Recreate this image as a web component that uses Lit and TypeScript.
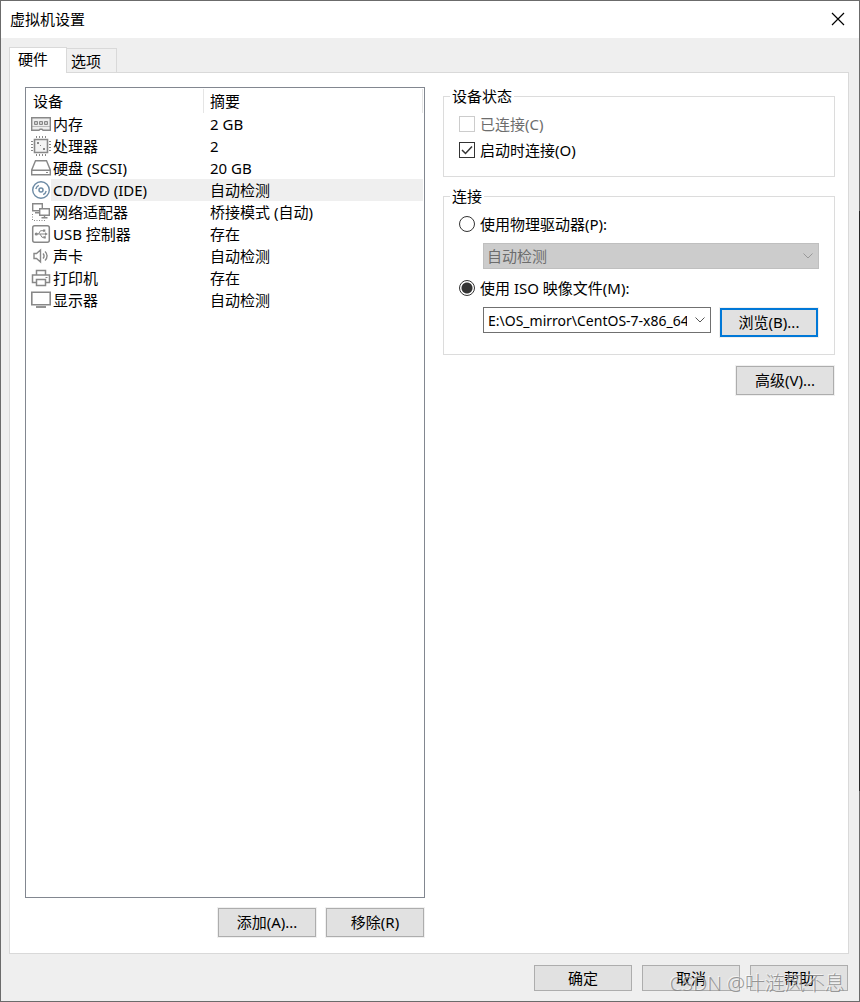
import { LitElement, html, svg, css } from "lit";
import { customElement, state } from "lit/decorators.js";

interface Device {
  icon: string;
  name: string;
  summary: string;
}

const DEVICES: Device[] = [
  { icon: "memory", name: "内存", summary: "2 GB" },
  { icon: "cpu", name: "处理器", summary: "2" },
  { icon: "disk", name: "硬盘 (SCSI)", summary: "20 GB" },
  { icon: "cd", name: "CD/DVD (IDE)", summary: "自动检测" },
  { icon: "network", name: "网络适配器", summary: "桥接模式 (自动)" },
  { icon: "usb", name: "USB 控制器", summary: "存在" },
  { icon: "sound", name: "声卡", summary: "自动检测" },
  { icon: "printer", name: "打印机", summary: "存在" },
  { icon: "display", name: "显示器", summary: "自动检测" },
];

const ICONS: Record<string, unknown> = {
  memory: svg`
    <path d="M.7 3.700h18.600v9.600H.7z" fill="#eee" stroke-width="1.400" />
    <path d="M.7 13v3.300h7.300l1-1h2l1 1h7.300V13" fill="#eee" stroke-width="1.400" />
    <path d="M3.500 7.500h3v3h-3zM8.500 7.500h3v3h-3zM13.500 7.500h3v3h-3z" fill="#ccc" />`,
  cpu: svg`
    <path d="M3.500 3.500h13v13h-13z" fill="#f4f4f4" stroke-width="1.600" />
    <path d="M5.500 0v2M8.500 0v2M11.500 0v2M14.500 0v2M5.500 18v2M8.500 18v2M11.500 18v2M14.500 18v2M0 5.500h2M0 8.500h2M0 11.500h2M0 14.500h2M18 5.500h2M18 8.500h2M18 11.500h2M18 14.500h2" />
    <path d="M6 6h2v2h-2zM12 12h2v2h-2zM9 9h1v1h-1z" fill="#888" stroke="none" />`,
  disk: svg`
    <path d="M4.500 2.700h11l3.800 9.300v4.800H.7V12zM.7 12.300h18.600" stroke-width="1.400" />
    <path d="M15 14.500h2" />`,
  cd: svg`
    <g stroke="#6d8ba5">
      <circle cx="10" cy="10" r="8.300" fill="#fff" stroke-width="1.400" />
      <circle cx="10" cy="10" r="2" stroke-width="1.500" />
      <path d="M4.800 9a5.500 5.500 0 0 1 3-3.700M15.200 11a5.500 5.500 0 0 1-3 3.700" stroke-width="1.300" />
    </g>`,
  network: svg`
    <path d="M1.700 1.700h9.600v7.100H1.700zM4 10.800h4" stroke-width="1.400" />
    <path d="M8.700 6.700h9.600v6.600H8.700z" fill="#fff" stroke-width="1.400" />
    <path d="M13.500 13.500v2M10.500 15.700h6" stroke-width="1.400" />
    <path d="M1.500 12v7M3 18.500h11" stroke-dasharray="1 1.500" />`,
  usb: svg`
    <rect x="1.700" y="1.700" width="16.600" height="16.600" rx="2" stroke-width="1.500" />
    <path d="M5 10h10M7.500 10l2-3.300h3M9 10l2 3.300h2.500" />
    <path d="M12 5.500h2.300v2.300H12zM12.500 12.200h2.300v2.300h-2.300zM14 8.300l2.800 1.700-2.800 1.700z" fill="#888" stroke="none" />
    <circle cx="5.300" cy="10" r="1.600" fill="#888" stroke="none" />`,
  sound: svg`
    <path d="M3 7.500h2.500l4-3.500v12l-4-3.500H3z" stroke-width="1.400" />
    <path d="M12 7.500a3.500 3.500 0 0 1 0 5M14 5.500a6 6 0 0 1 0 9" stroke-width="1.400" />`,
  printer: svg`
    <path d="M5.500 7V2.500h9V7M5.500 14.500h-4V7h17v7.500h-4M5.500 11.500h9v6h-9z" stroke-width="1.500" />
    <path d="M14.500 9.500h2" />`,
  display: svg`
    <path d="M.8 2.300h18.400v12.400H.8z" stroke-width="1.600" />
    <path d="M5 17h10" stroke-width="1.800" />`,
};

@customElement("app-root")
export class AppRoot extends LitElement {
  @state() private selected = 3;

  static styles = css`
    :host {
      display: block;
      font: 15px/20px "Noto Sans", "Noto Sans CJK SC", sans-serif;
      color: #000;
    }
    * { box-sizing: border-box; }
    button, input, select { font: inherit; color: inherit; margin: 0; }
    .dialog {
      display: flex;
      flex-direction: column;
      min-height: 100vh;
      position: relative;
      background: #efefef;
      border: 1px solid #6b6b6b;
    }
    .dialog::after {
      content: "";
      position: absolute;
      top: 21%;
      right: -1px;
      bottom: 21%;
      width: 1px;
      background: #262626;
    }
    .titlebar {
      display: flex;
      align-items: center;
      justify-content: space-between;
      height: 37px;
      padding: 0 9px 2px;
      background: #fff;
    }
    .title { font-size: 15px; font-weight: 400; margin: 0; }
    .close {
      display: flex;
      padding: 5px;
      border: 0;
      background: none;
    }
    .tabs {
      display: flex;
      align-items: flex-end;
      margin: 9px 10px 0 8px;
    }
    .tab {
      height: 24px;
      padding: 0 15px 0 4px;
      border: 1px solid #d9d9d9;
      border-bottom: 0;
      border-left: 0;
      background: #f0f0f0;
    }
    .tab.active {
      height: 26px;
      margin-bottom: -1px;
      padding: 0 18px 4px 8px;
      border-left: 1px solid #d9d9d9;
      background: #fff;
      z-index: 1;
    }
    .panel {
      flex: 1;
      display: grid;
      grid-template-columns: minmax(0, 400fr) minmax(0, 392fr);
      gap: 18px;
      margin: 0 10px 0 8px;
      padding: 14px 13px 16px 15px;
      border: 1px solid #d9d9d9;
      background: #fff;
    }
    .hardware { display: flex; flex-direction: column; gap: 10px; }
    .list {
      flex: 1;
      border: 1px solid #828790;
      padding-right: 1px;
    }
    .devices {
      width: 100%;
      table-layout: fixed;
      border-collapse: collapse;
    }
    .devices th {
      height: 25px;
      padding: 0 7px;
      font-weight: 400;
      text-align: left;
      background: linear-gradient(#e5e5e5, #e5e5e5) right 1px / 1px 24px no-repeat;
    }
    .devices th + th { padding-left: 6px; }
    .col-name { width: 178px; }
    .devices td { height: 22px; padding: 0 6px; white-space: nowrap; }
    .devices .device { display: flex; align-items: center; padding: 0 0 0 5px; }
    .label { flex: 1; padding-left: 2px; line-height: 22px; }
    .selected .label, .selected .summary { background: #efefef; }
    .icon { width: 20px; height: 20px; fill: none; stroke: #888; flex: none; }
    .actions { display: flex; justify-content: flex-end; gap: 10px; padding-right: 1px; }
    .btn {
      width: 98px;
      height: 29px;
      padding: 0 0 2px;
      border: 1px solid #adadad;
      background: #e1e1e1;
      box-shadow: 0 0 0 1px #f0f0f0;
    }
    .btn.focus { border: 2px solid #0078d7; }
    .settings { display: flex; flex-direction: column; }
    .group {
      min-width: 0;
      margin: -1px 0 11px;
      border: 1px solid #dcdcdc;
      padding: 5px 15px 17px;
    }
    .group.status { padding-bottom: 13px; margin-bottom: 10px; }
    .legend { padding: 0 2px; margin-left: -9px; }
    .choice { display: flex; align-items: center; gap: 5px; height: 26px; }
    .choice.disabled { color: #6d6d6d; }
    .box {
      appearance: none;
      flex: none;
      width: 16px;
      height: 16px;
      border: 1px solid #333;
      background: #fff;
    }
    .box:disabled { border-color: #ccc; }
    .box:checked {
      background: url("data:image/svg+xml,%3Csvg xmlns='http://www.w3.org/2000/svg' viewBox='0 0 14 14'%3E%3Cpath d='M2 7l3.500 3.500L12 3.500' fill='none' stroke='%23333' stroke-width='1.500'/%3E%3C/svg%3E");
    }
    .box.round { border-radius: 50%; }
    .box.round:checked { background: radial-gradient(circle, #333 5px, #fff 6px); }
    .combo {
      display: flex;
      align-items: center;
      height: 26px;
      margin-left: 24px;
      border: 1px solid #707070;
      background: #fff;
    }
    .physical {
      appearance: none;
      display: block;
      width: calc(100% - 24px);
      margin: 6px 0 6px 24px;
      padding: 0 3px;
      border-color: #bfbfbf;
      color: #6d6d6d;
      opacity: 1;
      background: #ccc url("data:image/svg+xml,%3Csvg xmlns='http://www.w3.org/2000/svg' width='10' height='6'%3E%3Cpath d='M.5.5L5 5 9.500.5' fill='none' stroke='%23999'/%3E%3C/svg%3E") right 5px center no-repeat;
    }
    .image-row {
      display: flex;
      align-items: flex-start;
      gap: 9px;
      margin-top: 6px;
      padding-right: 1px;
    }
    .image-row .combo { flex: 1; min-width: 0; }
    .path {
      flex: 1;
      min-width: 0;
      height: 24px;
      padding: 0;
      margin-left: 4px;
      border: 0;
      outline: 0;
      font-size: 14px;
      background: none;
    }
    .drop { display: flex; border: 0; padding: 0 5px; margin-left: 3px; background: none; }
    .image-row .btn { margin-top: 1px; flex: none; }
    .glyph { fill: none; stroke: #555; }
    .close .glyph { stroke: #000; stroke-width: 1.200; }
    .footer { display: flex; justify-content: flex-end; gap: 10px; padding: 11px 11px 10px; }
    .footer .btn { height: 26px; padding: 0; box-shadow: none; }
    .watermark {
      position: absolute;
      right: 14px;
      bottom: 3px;
      font-size: 20px;
      font-weight: 300;
      line-height: 28px;
      color: rgba(135, 135, 135, 0.85);
      text-shadow: -1px -1px 0 rgba(255, 255, 255, 0.6);
      pointer-events: none;
    }
  `;

  render() {
    return html`
      <div class="dialog">
        <header class="titlebar">
          <h1 class="title">虚拟机设置</h1>
          <button class="close" aria-label="关闭">
            <svg class="glyph" width="14" height="14"><path d="M1 1l12 12M13 1L1 13" /></svg>
          </button>
        </header>
        <nav class="tabs" role="tablist">
          <button class="tab active" role="tab" aria-selected="true">硬件</button>
          <button class="tab" role="tab" aria-selected="false">选项</button>
        </nav>
        <main class="panel">
          <section class="hardware">
            <div class="list">
              <table class="devices">
                <thead>
                  <tr><th class="col-name">设备</th><th>摘要</th></tr>
                </thead>
                <tbody>
                  ${DEVICES.map(
                    (d, i) => html`
                      <tr class=${i === this.selected ? "selected" : ""} @click=${() => (this.selected = i)}>
                        <td class="device">
                          <svg class="icon" viewBox="0 0 20 20">${ICONS[d.icon]}</svg>
                          <span class="label">${d.name}</span>
                        </td>
                        <td class="summary">${d.summary}</td>
                      </tr>
                    `
                  )}
                </tbody>
              </table>
            </div>
            <div class="actions">
              <button class="btn">添加(A)...</button>
              <button class="btn">移除(R)</button>
            </div>
          </section>
          <section class="settings">
            <fieldset class="group status">
              <legend class="legend">设备状态</legend>
              <label class="choice disabled"><input class="box" type="checkbox" disabled />已连接(C)</label>
              <label class="choice"><input class="box" type="checkbox" checked />启动时连接(O)</label>
            </fieldset>
            <fieldset class="group">
              <legend class="legend">连接</legend>
              <label class="choice"><input class="box round" type="radio" name="source" />使用物理驱动器(P):</label>
              <select class="combo physical" aria-label="物理驱动器" disabled>
                <option>自动检测</option>
              </select>
              <label class="choice"><input class="box round" type="radio" name="source" checked />使用 ISO 映像文件(M):</label>
              <div class="image-row">
                <div class="combo">
                  <input class="path" type="text" aria-label="ISO 映像文件" value="E:\\OS_mirror\\CentOS-7-x86_64" />
                  <button class="drop" aria-label="展开">
                    <svg class="glyph" width="10" height="6"><path d="M.5.5L5 5L9.500.5" /></svg>
                  </button>
                </div>
                <button class="btn focus">浏览(B)...</button>
              </div>
            </fieldset>
            <div class="actions">
              <button class="btn">高级(V)...</button>
            </div>
          </section>
        </main>
        <footer class="footer">
          <button class="btn">确定</button>
          <button class="btn">取消</button>
          <button class="btn">帮助</button>
        </footer>
        <div class="watermark">CSDN @叶涟风不息</div>
      </div>
    `;
  }
}
